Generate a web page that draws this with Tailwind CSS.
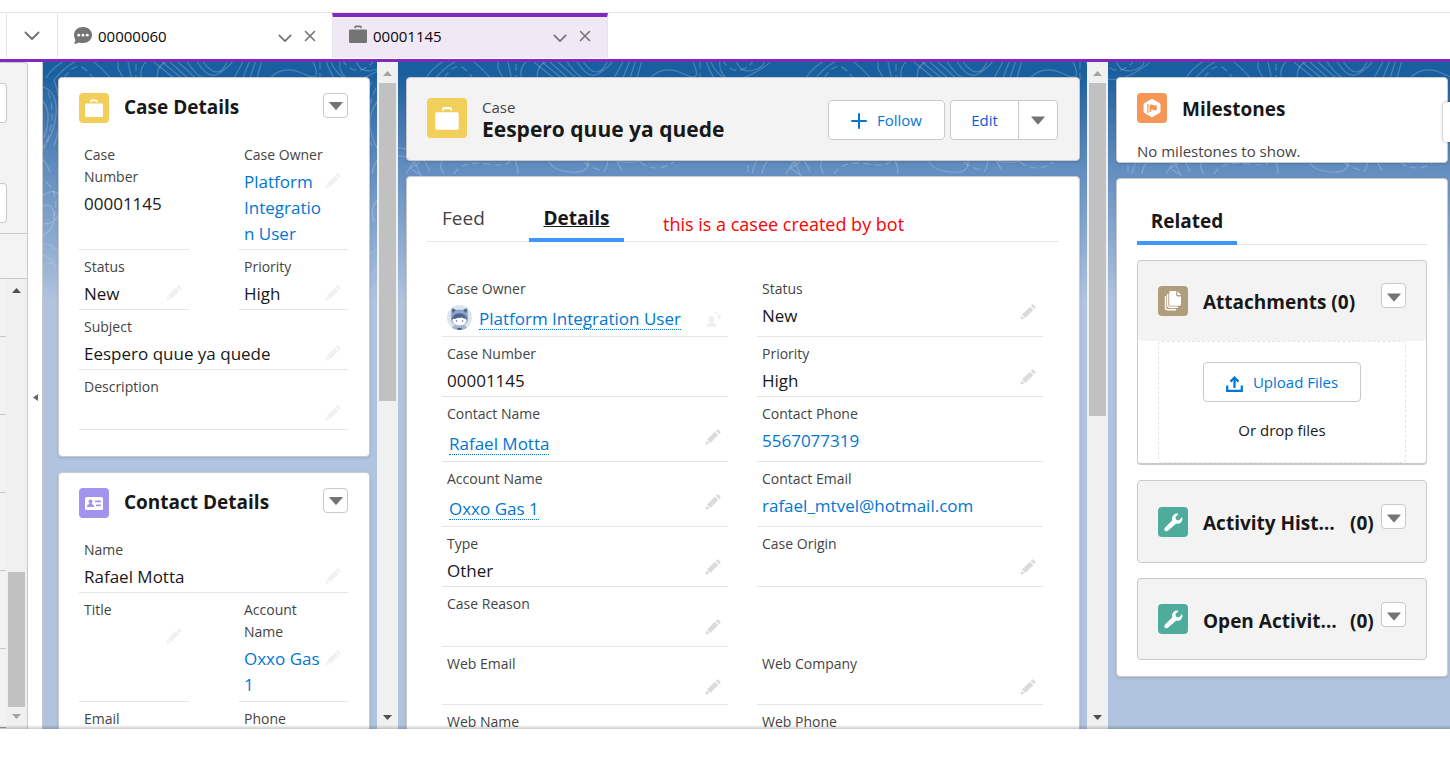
<!DOCTYPE html>
<html lang="en">
<head>
  <meta charset="UTF-8" />
  <meta name="viewport" content="width=device-width, initial-scale=1.0" />
  <title>00001145 | Service Console</title>
  <script src="https://cdn.jsdelivr.net/npm/@tailwindcss/browser@4"></script>
</head>
<body class="h-screen overflow-hidden flex flex-col bg-white text-[#181818] font-['Open_Sans','Noto_Sans',sans-serif]">

  <!-- Icon sprite -->
  <svg class="hidden">
    <symbol id="pencil" viewBox="0 0 16 16"><path d="M2 10.600 9.900 2.700 13.300 6.100 5.400 14zM10.800 1.800l1-1a1.200 1.200 0 0 1 1.700 0l1.700 1.700a1.200 1.200 0 0 1 0 1.700l-1 1zM1.500 11.600 4.400 14.500 1 15.500Q.2 15.700.5 14.900z" fill="currentColor"/></symbol>
    <symbol id="caret" viewBox="0 0 14 8"><path d="M.8 0h12.400q.9 0 .3.800L7.600 7.600q-.6.700-1.200 0L.5.800Q-.1 0 .8 0z" fill="currentColor"/></symbol>
    <symbol id="chevron" viewBox="0 0 16 10"><path d="M1.500 1.500 8 8l6.500-6.500" fill="none" stroke="currentColor" stroke-width="2" stroke-linecap="round" stroke-linejoin="round"/></symbol>
    <symbol id="close" viewBox="0 0 12 12"><path d="M1.500 1.500l9 9M10.500 1.500l-9 9" fill="none" stroke="currentColor" stroke-width="1.600" stroke-linecap="round"/></symbol>
    <symbol id="case" viewBox="0 0 20 20"><path d="M6.200 4.300V3.200Q6.200 1.600 7.800 1.600h4.400q1.600 0 1.600 1.600v1.100h-1.500V3.200H7.700v1.100z" fill="currentColor"/><rect x="1" y="5.500" width="18" height="13.500" rx="1.300" fill="currentColor"/></symbol>
    <symbol id="up" viewBox="0 0 9 5"><path d="M0 5 4.500 0 9 5z" fill="currentColor"/></symbol>
    <symbol id="down" viewBox="0 0 9 5"><path d="M0 0h9L4.500 5z" fill="currentColor"/></symbol>
    <symbol id="wrench" viewBox="0 0 20 20"><path d="M18.600 5.500c.2-.4.500-.3.600.1.500 2-.1 3.800-1.300 5-1.300 1.200-3 1.500-4.600 1L5.200 18.600c-1 1-2.500 1-3.300.1s-.8-2.400.2-3.300l7.200-7.200c-.6-1.700-.3-3.600 1-5C11.600 1.800 13.500 1.300 15 1.800c.4.100.4.500.1.700l-2.400 2.300v2.300l1.200 1.200h2.300z" fill="currentColor"/></symbol>
  </svg>

  <!-- Console tabs -->
  <div class="h-3 shrink-0"></div>
  <nav class="h-[50px] shrink-0 flex border-t border-[#e5e5e5] border-b-3 border-b-[#8128bd] pb-px text-[15px] text-[#080707] relative">
    <div class="w-[7px] border-r border-[#e5e5e5]"></div>
    <button aria-label="More tabs" class="w-[51px] flex items-center justify-center border-r border-[#e5e5e5] text-[#747474]">
      <svg class="w-4 h-2.5"><use href="#chevron"/></svg>
    </button>
    <div class="w-[274px] flex items-center px-4 pt-px">
      <svg class="w-[18px] h-[17px] mr-1.5 mb-0.5 text-[#747474]" viewBox="0 0 18 17"><path d="M9 0c5 0 9 3.400 9 8s-4 8-9 8c-1.200 0-2.400-.2-3.500-.6L1 16.900q-.8.200-.6-.6L1.500 13C.6 11.500 0 9.800 0 8c0-4.600 4-8 9-8z" fill="currentColor"/><circle cx="4.700" cy="8.200" r="1.400" fill="#fff"/><circle cx="9" cy="8.200" r="1.400" fill="#fff"/><circle cx="13.300" cy="8.200" r="1.400" fill="#fff"/></svg>
      <a href="#" class="flex-1">00000060</a>
      <button aria-label="Actions for 00000060" class="mr-3 mt-1 text-[#747474]"><svg class="w-[14px] h-[9px]"><use href="#chevron"/></svg></button>
      <button aria-label="Close 00000060" class="text-[#747474]"><svg class="w-3 h-3"><use href="#close"/></svg></button>
    </div>
    <div class="w-[274px] box-content flex items-center border-t-4 border-t-[#8128bd] border-x border-[#e5e5e5] bg-[#f1e8f6] pb-[3px]">
      <svg class="w-5 h-5 ml-[15px] mr-[5px] mb-1 text-[#747474]"><use href="#case"/></svg>
      <a href="#" class="flex-1">00001145</a>
      <button aria-label="Actions for 00001145" class="mr-3 mt-1 text-[#747474]"><svg class="w-[14px] h-[9px]"><use href="#chevron"/></svg></button>
      <button aria-label="Close 00001145" class="mr-4 text-[#747474]"><svg class="w-3 h-3"><use href="#close"/></svg></button>
    </div>
  </nav>

  <!-- Workspace -->
  <div class="flex-1 min-h-0 flex relative overflow-hidden">
    <!-- Collapsed list pane -->
    <aside class="w-7 shrink-0 flex flex-col bg-[#f3f3f3] border-r border-t border-[#c9c9c9] rounded-tr">
      <div class="h-[171px] shrink-0 border-b border-[#c9c9c9] pt-5 space-y-[60px]">
        <div class="w-[7px] h-10 bg-white border border-l-0 border-[#c9c9c9] rounded-r"></div>
        <div class="w-[7px] h-10 bg-white border border-l-0 border-[#c9c9c9] rounded-r"></div>
      </div>
      <div class="h-[45px] shrink-0 border-b border-[#c9c9c9]"></div>
      <div class="flex-1 min-h-0 flex overflow-hidden">
        <div class="w-1.5 flex flex-col">
          <div class="h-[58px] shrink-0 border-b border-[#c9c9c9]"></div>
          <div class="h-[78px] shrink-0 border-b border-[#c9c9c9]"></div>
          <div class="h-[78px] shrink-0 border-b border-[#c9c9c9]"></div>
          <div class="h-[78px] shrink-0 border-b border-[#c9c9c9]"></div>
          <div class="h-[78px] shrink-0 border-b border-[#c9c9c9]"></div>
          <div class="h-[79px] shrink-0 border-b border-[#a0a0a0]"></div>
        </div>
        <div class="flex-1 flex flex-col items-center bg-[#f0f0f0] pt-[9px] pb-2.5">
          <svg class="w-[9px] h-[5px] text-[#505050]"><use href="#up"/></svg>
          <div class="flex-1"></div>
          <div class="w-[17px] h-[135px] bg-[#c1c1c1]"></div>
          <svg class="w-[9px] h-[5px] mt-[7px] text-[#a3a3a3]"><use href="#down"/></svg>
        </div>
      </div>
    </aside>
    <button aria-label="Expand list" class="w-[15px] shrink-0 bg-white border-r border-[#c9c9c9] flex items-center justify-center pt-1 text-[#666]">
      <svg class="w-[5px] h-[7px]" viewBox="0 0 5 7"><path d="M5 0v7L0 3.500z" fill="currentColor"/></svg>
    </button>

    <main class="flex-1 min-w-0 flex relative bg-[#b0c4df]">
      <!-- Topographic backdrop -->
      <div class="absolute inset-x-0 top-0 h-[240px] bg-linear-to-b from-[#195f9f] from-5% via-[#638ec0] via-45% to-[#b0c4df]">
        <svg class="w-full h-full">
          <defs>
            <linearGradient id="fade" x1="0" y1="0" x2="0" y2="1"><stop offset="0.700" stop-color="#fff"/><stop offset="1" stop-color="#fff" stop-opacity="0"/></linearGradient>
            <mask id="fadeMask"><rect width="100%" height="100%" fill="url(#fade)"/></mask>
            <pattern id="topo" x="-23" width="380" height="240" patternUnits="userSpaceOnUse">
              <g fill="none" stroke="#fff" stroke-opacity="0.220" stroke-width="1.200">
                <path d="M26 16C32 6 40 1 46-2M34 18C42 8 50 2 58-2M92 18C84 8 76 2 72-2M98 0v6l6 12M108 0q2 10 4 18M122 18Q118 6 128-2M138 18Q134 4 150-2"/>
                <path d="M44 16Q56-2 66 8T72 18M116 2v14" stroke-dasharray="7 4"/>
                <path d="M134 0l22 18M142 0l22 18M150 0l20 18M158 0l20 18M166-2q14 22 26 20M176-2q12 20 22 14T214-2M182-2q16 24 26 0M224-2l-10 18M230-2l-7 18M236-2l-6 18M242-2l-5 18"/>
                <path d="M250 16Q264 2 284 12T292-2M306-2q2 8 8 18M320-2q-2 10 6 18M310-2q12 30 42 14T362-2M336-2q4 14 18 10T362-4"/>
                <path d="M300 0v18M322-2q16 22 34-2" stroke-dasharray="7 4"/>
                <path d="M352 112q4-24 28-26M0 86q22 2 30 24M362 112q2-16 18-18M0 94q14 0 20 18M6 112l6-10q6-4 10-6-2 6-12 10l12 8"/>
                <path d="M54 112q8-14 34-10t22-8M200 108q-14-4-20-12M348 92v20M240 100q16 12 34 0" stroke-dasharray="7 4"/>
                <path d="M44 112q-8-10 4-20M78 84q16-4 28 4t12 24M148 96q2 12 22 14t18-12M144 92q-10-14 8-24M206 90q4 12-2 20M212 98q30 8 44-10M222 108q-14-18 4-32"/>
                <path d="M20 24q18 4 16 28t-16 36M20 36q14 12 4 40M34 18q12 32 0 66M352 20q-14 24-6 62M362 34q-22 22-4 54M368 42q-18 24 4 40M376 48q-14 18 2 26"/>
                <path d="M28 30q10 26-4 56M356 26q-14 30-4 58M26 120q14 12 8 34" stroke-dasharray="7 4"/>
                <path d="M22 134q18-12 18 8t-16 20M20 146q12-8 14 6t-12 22M350 122q-12 14-4 30t-4 40M362 134q-14 10-8 26M374 142q-16 18-8 36M22 182q12-2 18 12M18 194q10-4 18 12M20 206q12-10 22 2M346 196q12-16 24 0M352 212q8-14 22-8M348 232q12-16 28-12M20 232l18-14"/>
              </g>
            </pattern>
          </defs>
          <rect width="100%" height="100%" fill="url(#topo)" mask="url(#fadeMask)"/>
        </svg>
      </div>

      <!-- Left column -->
      <section class="w-[334px] shrink-0 relative pl-[15px] pr-[7px] pt-[15px] space-y-[15px] overflow-hidden">
        <article class="bg-white border border-[#c9c9c9] rounded shadow-sm pl-5 pr-[21px] pt-[15px] pb-[26px]">
          <header class="flex items-start mb-[15px]">
            <span class="w-[30px] h-[30px] rounded-sm bg-[#f2cf5b] text-white flex items-center justify-center mr-[15px]"><svg class="w-5 h-5 mb-px"><use href="#case"/></svg></span>
            <h2 class="flex-1 text-[19px] leading-7 font-bold">Case Details</h2>
            <button aria-label="Case Details actions" class="w-[25px] h-[25px] border border-[#c9c9c9] rounded flex items-center justify-center text-[#747474]"><svg class="w-[14px] h-2"><use href="#caret"/></svg></button>
          </header>
          <dl class="grid grid-cols-[110px_1fr] gap-x-[50px] text-[17px] leading-[26px] font-[370] [&_dt]:text-sm [&_dt]:leading-[22px] [&_dt]:font-normal [&_dt]:text-[#444] [&>div]:pt-1.5 [&>div]:pb-0.5 [&>div]:pl-[5px] [&>div]:border-b [&>div]:border-[#e5e5e5] [&_dd]:flex [&_dd]:justify-between [&_dd]:pt-[3px] [&_dd]:pr-[7px] [&_dd_svg]:w-4 [&_dd_svg]:h-4 [&_dd_svg]:mt-1 [&_dd_svg]:shrink-0 [&_dd_svg]:text-[#f0f0f0]">
            <div>
              <dt>Case<br>Number</dt>
              <dd>00001145</dd>
            </div>
            <div>
              <dt class="whitespace-nowrap">Case Owner</dt>
              <dd><a href="#" class="-mr-2 text-[#0176d3] whitespace-nowrap">Platform<br>Integratio<br>n User</a><svg><use href="#pencil"/></svg></dd>
            </div>
            <div>
              <dt>Status</dt>
              <dd>New<svg><use href="#pencil"/></svg></dd>
            </div>
            <div>
              <dt>Priority</dt>
              <dd>High<svg><use href="#pencil"/></svg></dd>
            </div>
            <div class="col-span-2">
              <dt>Subject</dt>
              <dd>Eespero quue ya quede<svg><use href="#pencil"/></svg></dd>
            </div>
            <div class="col-span-2">
              <dt>Description</dt>
              <dd class="h-[29px]"><span></span><svg><use href="#pencil"/></svg></dd>
            </div>
          </dl>
        </article>

        <article class="bg-white border border-[#c9c9c9] rounded shadow-sm pl-5 pr-[21px] pt-[15px] pb-[26px]">
          <header class="flex items-start mb-[15px]">
            <span class="w-[30px] h-[30px] rounded-sm bg-[#a094ed] text-white flex items-center justify-center mr-[15px]">
              <svg class="w-[18px] h-[13px]" viewBox="0 0 18 13"><rect width="18" height="13" rx="1.500" fill="#fff"/><g fill="#a094ed"><circle cx="5.500" cy="4.500" r="2"/><path d="M2 10V9q0-1 1.300-1.400 1.200-.4 1.200-1.600h2q0 1.200 1.200 1.600Q9 8 9 9v1z"/><rect x="10" y="3.500" width="6" height="1.800" rx=".5"/><rect x="11" y="7.500" width="5" height="1.800" rx=".5"/></g></svg>
            </span>
            <h2 class="flex-1 text-[19px] leading-7 font-bold">Contact Details</h2>
            <button aria-label="Contact Details actions" class="w-[25px] h-[25px] border border-[#c9c9c9] rounded flex items-center justify-center text-[#747474]"><svg class="w-[14px] h-2"><use href="#caret"/></svg></button>
          </header>
          <dl class="grid grid-cols-[110px_1fr] gap-x-[50px] text-[17px] leading-[26px] font-[370] [&_dt]:text-sm [&_dt]:leading-[22px] [&_dt]:font-normal [&_dt]:text-[#444] [&>div]:pt-1.5 [&>div]:pb-0.5 [&>div]:pl-[5px] [&>div]:border-b [&>div]:border-[#e5e5e5] [&_dd]:flex [&_dd]:justify-between [&_dd]:pt-[3px] [&_dd]:pr-[7px] [&_dd_svg]:w-4 [&_dd_svg]:h-4 [&_dd_svg]:mt-1 [&_dd_svg]:shrink-0 [&_dd_svg]:text-[#f0f0f0]">
            <div class="col-span-2">
              <dt>Name</dt>
              <dd>Rafael Motta<svg><use href="#pencil"/></svg></dd>
            </div>
            <div>
              <dt>Title</dt>
              <dd><span></span><svg><use href="#pencil"/></svg></dd>
            </div>
            <div>
              <dt>Account<br>Name</dt>
              <dd><a href="#" class="-mr-2 pb-px text-[#0176d3] whitespace-nowrap">Oxxo Gas<br>1</a><svg><use href="#pencil"/></svg></dd>
            </div>
            <div>
              <dt>Email</dt>
              <dd class="h-[29px]"></dd>
            </div>
            <div>
              <dt>Phone</dt>
              <dd class="h-[29px]"></dd>
            </div>
          </dl>
        </article>
      </section>

      <div class="w-[21px] shrink-0 relative bg-[#f0f0f0] flex flex-col items-center pt-[9px] pb-[9px]">
        <svg class="w-[9px] h-[5px] mb-[7px] text-[#a3a3a3]"><use href="#up"/></svg>
        <div class="w-[17px] h-[318px] bg-[#c1c1c1]"></div>
        <div class="flex-1"></div>
        <svg class="w-[9px] h-[5px] text-[#505050]"><use href="#down"/></svg>
      </div>

      <!-- Record column -->
      <section class="flex-1 min-w-0 relative pl-2 pt-[15px] pr-[7px] space-y-[15px] overflow-hidden">
        <header class="h-[84px] flex items-center bg-[#f3f3f3] border border-[#c9c9c9] rounded shadow pl-5 pr-[21px]">
          <span class="w-10 h-10 mb-0.5 rounded bg-[#f2cf5b] text-white flex items-center justify-center mr-[15px]"><svg class="w-[26px] h-[26px]"><use href="#case"/></svg></span>
          <div class="flex-1">
            <p class="text-[15px] leading-5 text-[#444] font-[370]">Case</p>
            <h1 class="text-[21px] leading-6 font-bold whitespace-nowrap">Eespero quue ya quede</h1>
          </div>
          <button class="w-[117px] h-10 mt-0.5 flex items-center justify-center gap-2.5 bg-white border border-[#c9c9c9] rounded text-[15px] text-[#0176d3] mr-[5px]">
            <svg class="w-4 h-4 mt-0.5" viewBox="0 0 16 16"><path d="M8 1v14M1 8h14" stroke="currentColor" stroke-width="2" stroke-linecap="round"/></svg>
            Follow
          </button>
          <div class="flex mt-0.5">
            <button class="w-[69px] h-10 bg-white border border-[#c9c9c9] rounded-l text-[15px] text-[#0b5cd3]">Edit</button>
            <button aria-label="Show more actions" class="w-10 h-10 -ml-px bg-white border border-[#c9c9c9] rounded-r flex items-center justify-center text-[#747474]"><svg class="w-[14px] h-[9px]"><use href="#caret"/></svg></button>
          </div>
        </header>

        <article class="bg-white border border-[#c9c9c9] rounded shadow-sm pl-5 pr-[21px] pt-[15px]">
          <div class="flex h-[50px] border-b border-[#e5e5e5] text-[19px] leading-[52px]">
            <a href="#" class="px-[15px] mr-[30px] w-[72px] text-[#444] font-[370]">Feed</a>
            <a href="#" class="w-[95px] h-[50px] text-center font-bold underline border-b-4 border-[#3e97ff]">Details</a>
            <p class="pl-[39px] pt-1.5 text-[18px] text-[#f00] whitespace-nowrap">this is a casee created by bot</p>
          </div>

          <!-- Case fields, two per row -->
          <dl class="mt-[30px] mx-[15px] grid grid-cols-2 auto-rows-min gap-x-[29px] text-[17px] leading-[26px] font-[370] [&_dt]:text-sm [&_dt]:leading-[22px] [&_dt]:font-normal [&_dt]:text-[#444] [&>div]:pt-1.5 [&>div]:px-[5px] [&>div]:pr-[7px] [&>div]:border-[#e5e5e5] [&_dd]:flex [&_dd]:justify-between [&_dd]:items-start [&_dd]:pt-[3px]">
            <div class="h-[65px] border-b">
              <dt>Case Owner</dt>
              <dd>
                <svg class="w-[25px] h-[25px] mt-0.5 mr-[7px]" viewBox="0 0 25 25"><circle cx="12.500" cy="12.500" r="12.500" fill="#dce4ee"/><path d="M5 23q2-4 7.500-4t7.500 4q-3 2-7.500 2T5 23z" fill="#9fb3d3"/><path d="M5 3.200l4 1.800q3.500-.8 7 0l4-1.800q1.300 2.800.6 5.600Q23 20.500 12.500 20.500T4.400 8.800Q3.700 6 5 3.200z" fill="#8fa5ca"/><path d="M5.200 3.200 9 5 6 8q-1.500-2-.8-4.800zM19.800 3.200 16 5l3 3q1.500-2 .8-4.800z" fill="#4d648f"/><ellipse cx="12.500" cy="14" rx="7.500" ry="5.800" fill="#4d648f"/><ellipse cx="12.500" cy="15.200" rx="7" ry="5.400" fill="#fff"/><path d="M5.800 14q2-5 6.200-5 5 0 7.200 5-3-.3-4.200-1.800-.8 1-2 .3-1 1-2.300.3Q9.500 14 5.800 14z" fill="#4d648f"/><circle cx="9.500" cy="16" r=".8" fill="#4d648f"/><circle cx="15.500" cy="16" r=".8" fill="#4d648f"/><path d="M10 23h5l-.8 2h-3.400z" fill="#4d648f"/></svg>
                <a href="#" class="mt-[3px] h-6 leading-[25px] text-[#0176d3] border-b border-dotted border-[#0176d3]">Platform Integration User</a>
                <svg class="w-[15px] h-4 ml-auto mt-2 text-[#f0f0f0]" viewBox="0 0 15 16"><path d="M5.500 5a3 3 0 0 1 3 3.200q0 1.500-1 2.500v1q3.200 1 3.200 3v1H.5v-1q0-2 3-3v-1q-1-1-1-2.500A3 3 0 0 1 5.500 5z" fill="currentColor"/><path d="M8 1.500q5 0 5.500 5.500M12 5.500l1.500 2L15 5" fill="none" stroke="currentColor" stroke-width="1.500"/></svg>
              </dd>
            </div>
            <div class="h-[65px] border-b">
              <dt>Status</dt>
              <dd>New<svg class="w-4 h-4 mt-px text-[#dddbda]"><use href="#pencil"/></svg></dd>
            </div>

            <div class="h-[60px] border-b">
              <dt>Case Number</dt>
              <dd>00001145</dd>
            </div>
            <div class="h-[60px] border-b">
              <dt>Priority</dt>
              <dd>High<svg class="w-4 h-4 mt-px text-[#dddbda]"><use href="#pencil"/></svg></dd>
            </div>

            <div class="h-[65px] border-b">
              <dt>Contact Name</dt>
              <dd><a href="#" class="ml-0.5 mt-[3px] h-6 leading-[25px] text-[#0176d3] border-b border-dotted border-[#0176d3]">Rafael Motta</a><svg class="w-4 h-4 mt-px text-[#dddbda]"><use href="#pencil"/></svg></dd>
            </div>
            <div class="h-[65px] border-b">
              <dt>Contact Phone</dt>
              <dd><a href="#" class="text-[#0176d3]">5567077319</a></dd>
            </div>

            <div class="h-[65px] border-b">
              <dt>Account Name</dt>
              <dd><a href="#" class="ml-0.5 mt-[3px] h-6 leading-[25px] text-[#0176d3] border-b border-dotted border-[#0176d3]">Oxxo Gas 1</a><svg class="w-4 h-4 mt-px text-[#dddbda]"><use href="#pencil"/></svg></dd>
            </div>
            <div class="h-[65px] border-b">
              <dt>Contact Email</dt>
              <dd><a href="#" class="text-[#0176d3]">rafael_mtvel@hotmail.com</a></dd>
            </div>

            <div class="h-[60px] border-b">
              <dt>Type</dt>
              <dd>Other<svg class="w-4 h-4 mt-px text-[#dddbda]"><use href="#pencil"/></svg></dd>
            </div>
            <div class="h-[60px] border-b">
              <dt>Case Origin</dt>
              <dd><span></span><svg class="w-4 h-4 mt-px text-[#dddbda]"><use href="#pencil"/></svg></dd>
            </div>

            <div class="h-[60px] border-b">
              <dt>Case Reason</dt>
              <dd><span></span><svg class="w-4 h-4 mt-px text-[#dddbda]"><use href="#pencil"/></svg></dd>
            </div>
            <div></div>

            <div class="h-[58px] border-b">
              <dt>Web Email</dt>
              <dd><span></span><svg class="w-4 h-4 mt-px text-[#dddbda]"><use href="#pencil"/></svg></dd>
            </div>
            <div class="h-[58px] border-b">
              <dt>Web Company</dt>
              <dd><span></span><svg class="w-4 h-4 mt-px text-[#dddbda]"><use href="#pencil"/></svg></dd>
            </div>

            <div class="h-[60px]">
              <dt>Web Name</dt>
              <dd></dd>
            </div>
            <div class="h-[60px]">
              <dt>Web Phone</dt>
              <dd></dd>
            </div>
          </dl>
        </article>
      </section>

      <div class="w-[21px] shrink-0 relative bg-[#f0f0f0] flex flex-col items-center pt-[9px] pb-[9px]">
        <svg class="w-[9px] h-[5px] mb-[7px] text-[#a3a3a3]"><use href="#up"/></svg>
        <div class="w-[17px] h-[333px] bg-[#c1c1c1]"></div>
        <div class="flex-1"></div>
        <svg class="w-[9px] h-[5px] text-[#505050]"><use href="#down"/></svg>
      </div>

      <!-- Right column -->
      <section class="w-[342px] shrink-0 relative pl-2 pr-0.5 pt-[15px] space-y-[15px] overflow-hidden">
        <article class="h-[86px] overflow-hidden bg-white border border-[#c9c9c9] rounded shadow-sm px-5 pt-[15px]">
          <header class="flex items-start">
            <span class="w-[30px] h-[30px] rounded bg-[#f59656] flex items-center justify-center mr-[15px]"><svg class="w-[18px] h-5" viewBox="0 0 18 20"><path d="M8 1.200q1-.6 2 0l6.500 3.700q1 .6 1 1.700v6.800q0 1.100-1 1.700L10 18.800q-1 .6-2 0l-6.500-3.700q-1-.6-1-1.700V6.600q0-1.100 1-1.700z" fill="#fff"/><path d="M4.300 6h1.200v9H4.300zM6.500 7q2.300-1 3.700 0t3.600.2v4.900q-2 .8-3.600-.2t-2.100.1v2H6.500z" fill="#f59656"/></svg></span>
            <h2 class="text-[19px] leading-8 font-bold">Milestones</h2>
          </header>
          <p class="mt-3.5 text-[15px] leading-6 text-[#444]">No milestones to show.</p>
        </article>

        <article class="bg-white border border-[#c9c9c9] rounded shadow-sm px-5 pt-[15px] pb-4">
          <div class="flex h-[51px] border-b border-[#e5e5e5] mb-[15px]">
            <a href="#" class="w-[100px] h-[51px] text-center text-[19px] leading-[55px] font-bold border-b-4 border-[#3e97ff]">Related</a>
          </div>

          <div class="border border-[#c9c9c9] border-b-2 rounded mb-[15px]">
            <header class="h-20 flex items-center bg-[#f3f3f3] rounded px-5">
              <span class="w-[30px] h-[30px] rounded bg-[#b09d7b] flex items-center justify-center mr-[15px]"><svg class="w-[18px] h-5" viewBox="0 0 18 20"><path d="M6.500 0h5.700v4q0 1.500 1.500 1.500H17v8q0 1.300-1.300 1.300H6.500q-1.300 0-1.300-1.300V1.300Q5.200 0 6.500 0zM13.500 0 17 4h-3q-.5 0-.5-.6z" fill="#fff"/><path d="M3.600 3v11q0 2.300 2.300 2.300h8M1.500 5v11.500q0 2.300 2.300 2.300H12" fill="none" stroke="#fff" stroke-width="1.400"/></svg></span>
              <h3 class="flex-1 text-[19px] leading-7 pt-0.5 font-bold whitespace-nowrap">Attachments (0)</h3>
              <button aria-label="Attachments actions" class="w-[25px] h-[25px] mb-3 bg-white border border-[#c9c9c9] rounded flex items-center justify-center text-[#747474]"><svg class="w-[14px] h-[9px] mt-1"><use href="#caret"/></svg></button>
            </header>
            <div class="mx-5 h-[122px] border border-dashed border-[#e5e5e5] rounded flex flex-col items-center pt-5">
              <button class="w-[158px] h-10 flex items-center justify-center gap-2.5 border border-[#c9c9c9] rounded text-[15px] text-[#0176d3]">
                <svg class="w-[17px] h-4 mt-[3px]" viewBox="0 0 17 16"><path d="M1.200 9.500v5.300h14.600V9.500M8.500 12V3" fill="none" stroke="currentColor" stroke-width="2.200"/><path d="M4.500 5.600 8.500 1.600 12.500 5.600" fill="none" stroke="currentColor" stroke-width="2.200"/></svg>
                Upload Files
              </button>
              <p class="mt-4 text-[15px] leading-6">Or drop files</p>
            </div>
          </div>

          <div class="h-[83px] flex items-center bg-[#f3f3f3] border border-[#c9c9c9] rounded px-5 mb-[15px]">
            <span class="w-[30px] h-[30px] rounded bg-[#4dac9c] text-white flex items-center justify-center mr-[15px]"><svg class="w-5 h-5"><use href="#wrench"/></svg></span>
            <h3 class="flex-1 flex text-[19px] leading-7 pt-[3px] font-bold whitespace-nowrap"><span class="w-[147px]">Activity Hist…</span><span>(0)</span></h3>
            <button aria-label="Activity History actions" class="w-[25px] h-[25px] mb-2.5 bg-white border border-[#c9c9c9] rounded flex items-center justify-center text-[#747474]"><svg class="w-[14px] h-[9px] mt-1"><use href="#caret"/></svg></button>
          </div>

          <div class="h-[82px] flex items-center bg-[#f3f3f3] border border-[#c9c9c9] rounded px-5">
            <span class="w-[30px] h-[30px] rounded bg-[#4dac9c] text-white flex items-center justify-center mr-[15px]"><svg class="w-5 h-5"><use href="#wrench"/></svg></span>
            <h3 class="flex-1 flex text-[19px] leading-7 pt-[3px] font-bold whitespace-nowrap"><span class="w-[147px]">Open Activit…</span><span>(0)</span></h3>
            <button aria-label="Open Activities actions" class="w-[25px] h-[25px] mb-2.5 bg-white border border-[#c9c9c9] rounded flex items-center justify-center text-[#747474]"><svg class="w-[14px] h-[9px] mt-1"><use href="#caret"/></svg></button>
          </div>
        </article>

        <!-- Edge handle of the side panel -->
        <div class="absolute -right-1 top-10 w-[11px] h-10 bg-white rounded shadow-[0_0_3px_rgba(0,0,0,0.4)]"></div>
      </section>
    </main>

    <div class="absolute inset-x-0 bottom-0 h-1 bg-linear-to-b from-transparent to-black/20"></div>
  </div>

  <footer class="h-[35px] shrink-0 bg-white"></footer>
</body>
</html>
